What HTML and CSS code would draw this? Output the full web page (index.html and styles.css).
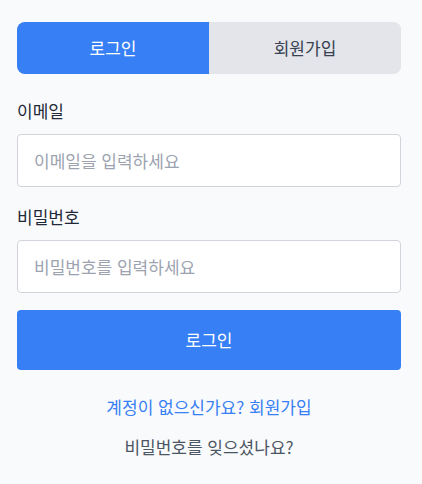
FILE: index.html
```html
<!DOCTYPE html>
<html lang="ko">
<head>
<meta charset="utf-8">
<link rel="stylesheet" href="styles.css">
</head>
<body>
<div class="page">
  <div class="tabs">
    <button class="tab active">로그인</button>
    <button class="tab">회원가입</button>
  </div>
  <form class="form">
    <label class="label" for="email">이메일</label>
    <input class="input" id="email" type="email" placeholder="이메일을 입력하세요">
    <label class="label" for="pw">비밀번호</label>
    <input class="input" id="pw" type="password" placeholder="비밀번호를 입력하세요">
    <button class="submit" type="button">로그인</button>
  </form>
  <div class="links">
    <a class="signup" href="#">계정이 없으신가요? 회원가입</a>
    <a class="forgot" href="#">비밀번호를 잊으셨나요?</a>
  </div>
</div>
</body>
</html>
```
FILE: styles.css
```css
* { box-sizing: border-box; }
html, body { margin: 0; padding: 0; }
body {
  background: #f9fafb;
  font-family: "Noto Sans CJK KR", sans-serif;
  color: #1f2937;
}
.page {
  padding: 22px 21px 0 17px;
}
.tabs {
  display: flex;
  height: 52px;
  border-radius: 8px;
  overflow: hidden;
  background: #e3e5ea;
}
.tab {
  flex: 1;
  border: 0;
  margin: 0;
  padding: 0;
  background: #e3e5ea;
  color: #374151;
  font-family: inherit;
  font-size: 17px;
  line-height: 24px;
}
.tab.active {
  background: #377ff4;
  color: #ffffff;
}
.form {
  display: flex;
  flex-direction: column;
  margin-top: 25px;
}
.label {
  font-size: 17px;
  line-height: 24px;
  color: #1f2937;
  margin-bottom: 11px;
}
.input {
  height: 53px;
  border: 1px solid #d1d5db;
  border-radius: 4px;
  background: #ffffff;
  padding: 0 16px;
  font-family: inherit;
  font-size: 17px;
  color: #1f2937;
  margin-bottom: 18px;
}
.input::placeholder { color: #9ca3af; }
.submit {
  height: 60px;
  margin-top: -1px;
  border: 0;
  border-radius: 4px;
  background: #377ff4;
  color: #ffffff;
  font-family: inherit;
  font-size: 17px;
  line-height: 24px;
}
.links {
  display: flex;
  flex-direction: column;
  align-items: center;
  margin-top: 25px;
  gap: 16px;
}
.signup, .forgot {
  font-size: 17px;
  line-height: 24px;
  text-decoration: none;
}
.signup { color: #377ff4; }
.forgot { color: #4b5563; }
```
